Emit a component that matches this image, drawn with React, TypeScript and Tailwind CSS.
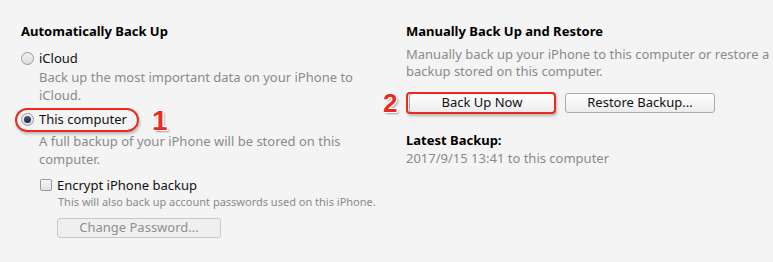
import React from "react";

const font = { fontFamily: '"Noto Sans", "Open Sans", sans-serif' };

function Radio({ checked }: { checked?: boolean }) {
  return (
    <span className="relative inline-flex h-[13px] w-[13px] shrink-0 items-center justify-center rounded-full border border-[#9a9a9a] bg-gradient-to-b from-[#f0f0f0] to-[#dcdcdc]">
      {checked && (
        <span className="h-[7px] w-[7px] rounded-full bg-gradient-to-b from-[#4a5a78] to-[#1c2a45]" />
      )}
    </span>
  );
}

function Btn({ children, w, disabled }: { children: React.ReactNode; w: string; disabled?: boolean }) {
  return (
    <div
      className={`flex h-[20px] items-center justify-center rounded-[3px] border text-[13px] ${w} ${
        disabled
          ? "border-[#c8c8c8] bg-[#efefef] text-[#8f8f8f]"
          : "border-[#a9a9a9] bg-gradient-to-b from-[#ffffff] to-[#ececec] text-[#111]"
      }`}
    >
      {children}
    </div>
  );
}

const numStyle: React.CSSProperties = {
  fontFamily: '"Liberation Sans", Arial, sans-serif',
  textShadow:
    "1px 0 0 #fff, -1px 0 0 #fff, 0 1px 0 #fff, 0 -1px 0 #fff, 1px 1px 0 #fff, -1px -1px 0 #fff, 1px -1px 0 #fff, -1px 1px 0 #fff, 2px 2px 2px rgba(0,0,0,0.35)",
};

export default function App() {
  return (
    <div className="flex h-[262px] w-[773px] bg-[#f4f4f4] pl-[21px] pt-[22px]" style={font}>
      {/* Left column */}
      <div className="flex w-[385px] flex-col">
        <div className="h-[18px] text-[13px] font-bold leading-[18px] text-black">Automatically Back Up</div>
        <div className="mt-[9px] flex h-[18px] items-center gap-[5px] text-[13px] leading-[18px] text-[#111]">
          <Radio />
          <span>iCloud</span>
        </div>
        <div className="mt-[1px] w-[350px] pl-[18px] text-[13px] leading-[18px] text-[#8a8a8a]">
          Back up the most important data on your iPhone to iCloud.
        </div>
        <div className="relative mt-[6px] flex h-[18px] items-center gap-[5px] text-[13px] leading-[18px] text-[#111]">
          <Radio checked />
          <span>This computer</span>
          <div className="absolute left-[-6px] top-[-2px] h-[24px] w-[124px] rounded-full border-[2.5px] border-[#ea2a1e] shadow-[1px_2px_3px_rgba(0,0,0,0.25)]" />
          <span
            className="absolute left-[131px] top-[2px] text-[28px] font-bold leading-[18px] text-[#ea2a1e]"
            style={numStyle}
          >
            1
          </span>
        </div>
        <div className="mt-[4px] w-[340px] pl-[18px] text-[13px] leading-[18px] text-[#8a8a8a]">
          A full backup of your iPhone will be stored on this computer.
        </div>
        <div className="mt-[8px] flex h-[18px] items-center gap-[5px] pl-[19px] text-[13px] leading-[18px] text-[#111]">
          <span className="h-[12px] w-[12px] shrink-0 rounded-[2px] border border-[#9a9a9a] bg-gradient-to-b from-[#f7f7f7] to-[#e2e2e2]" />
          <span>Encrypt iPhone backup</span>
        </div>
        <div className="pl-[37px] text-[11px] leading-[16px] text-[#8a8a8a]">
          This will also back up account passwords used on this iPhone.
        </div>
        <div className="mt-[8px] pl-[36px]">
          <Btn w="w-[164px]" disabled>
            Change Password...
          </Btn>
        </div>
      </div>

      {/* Right column */}
      <div className="flex flex-col">
        <div className="h-[18px] text-[13px] font-bold leading-[18px] text-black">Manually Back Up and Restore</div>
        <div className="mt-[6px] w-[367px] text-[13px] leading-[17px] text-[#8a8a8a]">
          Manually back up your iPhone to this computer or restore a backup stored on this computer.
        </div>
        <div className="relative mt-[13px] flex gap-[10px] pl-[3px]">
          <Btn w="w-[146px]">Back Up Now</Btn>
          <Btn w="w-[150px]">Restore Backup...</Btn>
          <div className="absolute left-[0px] top-[-1px] h-[22px] w-[150px] rounded-[4px] border-[2.5px] border-[#ea2a1e] shadow-[1px_2px_3px_rgba(0,0,0,0.25)]" />
          <span
            className="absolute left-[-23px] top-[0px] text-[26px] font-bold leading-[20px] text-[#ea2a1e]"
            style={numStyle}
          >
            2
          </span>
        </div>
        <div className="mt-[18px] text-[13px] font-bold leading-[18px] text-black">Latest Backup:</div>
        <div className="text-[13px] leading-[18px] text-[#8a8a8a]">2017/9/15 13:41 to this computer</div>
      </div>
    </div>
  );
}
